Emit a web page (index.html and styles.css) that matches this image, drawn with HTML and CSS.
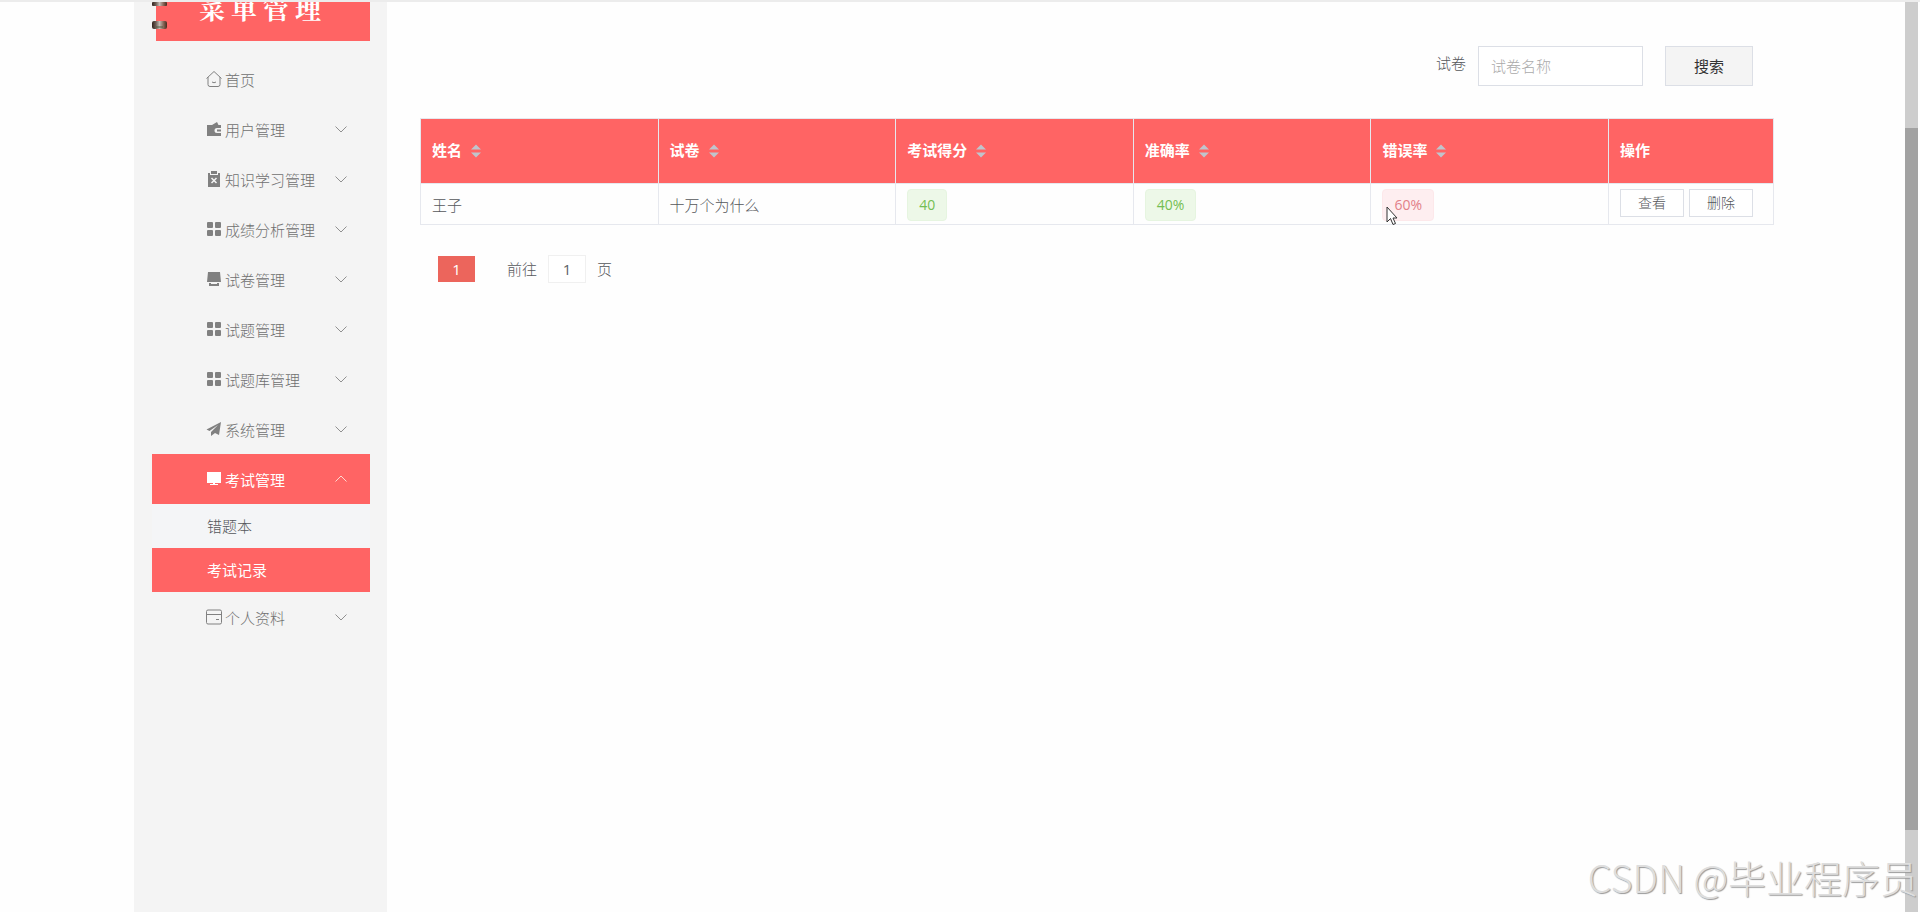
FILE: index.html
```html
<!DOCTYPE html>
<html lang="zh-CN">
<head>
  <meta charset="UTF-8" />
  <meta name="viewport" content="width=device-width, initial-scale=1.0" />
  <title>考试记录</title>
  <link rel="stylesheet" href="styles.css">
</head>
<body>
  <!-- Shared icons -->
  <svg class="sprite" aria-hidden="true">
    <symbol id="grid" viewBox="0 0 16 16">
      <rect x="1" y="1" width="6" height="6" rx="1" />
      <rect x="9" y="1" width="6" height="6" rx="1" />
      <rect x="1" y="9" width="6" height="6" rx="1" />
      <rect x="9" y="9" width="6" height="6" rx="1" />
    </symbol>
    <symbol id="arrow" viewBox="0 0 12 12">
      <path d="M0.500 3.500L6 9l5.500-5.500" fill="none" stroke="currentColor" />
    </symbol>
    <symbol id="sort" viewBox="0 0 10 14">
      <path d="M0 5.500L5 0.500l5 5zM0 8.500h10l-5 5z" />
    </symbol>
    <linearGradient id="metal">
      <stop offset="0" stop-color="#33251f" />
      <stop offset="0.250" stop-color="#6b5c54" />
      <stop offset="0.500" stop-color="#c4bab4" />
      <stop offset="0.750" stop-color="#8a6a5c" />
      <stop offset="1" stop-color="#4a2a1c" />
    </linearGradient>
  </svg>

  <div class="page">
    <aside class="sidebar">
      <div class="banner">
        <svg class="rings" viewBox="0 0 16 28">
          <rect x="0" y="0" width="15" height="4" rx="1" fill="url(#metal)" />
          <rect x="0" y="19" width="15" height="8" rx="2" fill="url(#metal)" />
          <path d="M4 25h7" fill="none" stroke="#4c5a3c" />
        </svg>
        <h1>菜单管理</h1>
      </div>
      <nav class="menu">
        <a class="item" href="#">
          <svg class="icon" viewBox="0 0 16 16"><path d="M2 6v7.500q0 2 2 2h8q2 0 2-2V6M0.500 7.500L8 0.500l7.500 7M6 11q2 1.500 4 0" fill="none" stroke="currentColor" /></svg>
          <span>首页</span>
        </a>
        <a class="item" href="#">
          <svg class="icon" viewBox="0 0 16 16"><path d="M1 4h5l5-3 1.500 3H15v3h-4a2 2 0 0 0 0 5h4v3H1zM11 8.500h4v2h-4z" /></svg>
          <span>用户管理</span><svg class="arrow"><use href="#arrow" /></svg>
        </a>
        <a class="item" href="#">
          <svg class="icon" viewBox="0 0 16 16"><path d="M2 2h2v2h8V2h2v14H2zM5 0h6v3H5z" /><path d="M5.500 7l5 5m0-5l-5 5" fill="none" stroke="#f4f4f4" stroke-width="1.500" /></svg>
          <span>知识学习管理</span><svg class="arrow"><use href="#arrow" /></svg>
        </a>
        <a class="item" href="#">
          <svg class="icon"><use href="#grid" /></svg>
          <span>成绩分析管理</span><svg class="arrow"><use href="#arrow" /></svg>
        </a>
        <a class="item" href="#">
          <svg class="icon" viewBox="0 0 16 16"><path d="M2 1h12l1 10H1zM3 12h2v1h6v-1h2v3H3z" /></svg>
          <span>试卷管理</span><svg class="arrow"><use href="#arrow" /></svg>
        </a>
        <a class="item" href="#">
          <svg class="icon"><use href="#grid" /></svg>
          <span>试题管理</span><svg class="arrow"><use href="#arrow" /></svg>
        </a>
        <a class="item" href="#">
          <svg class="icon"><use href="#grid" /></svg>
          <span>试题库管理</span><svg class="arrow"><use href="#arrow" /></svg>
        </a>
        <a class="item" href="#">
          <svg class="icon" viewBox="0 0 16 16"><path d="M0.500 8.500L15 1l-2 13-4-2-4 3v-4l7-7-8.500 6z" /></svg>
          <span>系统管理</span><svg class="arrow"><use href="#arrow" /></svg>
        </a>
        <a class="item active" href="#">
          <svg class="icon" viewBox="0 0 16 16"><path d="M1 1h14v11H1zM7 12h2v1h3v1H4v-1h3z" /></svg>
          <span>考试管理</span><svg class="arrow up"><use href="#arrow" /></svg>
        </a>
        <a class="sub-item" href="#">错题本</a>
        <a class="sub-item active" href="#">考试记录</a>
        <a class="item" href="#">
          <svg class="icon" viewBox="0 0 16 16"><path d="M2 1h12q1.500 0 1.500 1.500v11q0 1.500-1.500 1.500H2q-1.500 0-1.500-1.500v-11Q0.500 1 2 1zM0.500 5.500h15M10 10.500h3" fill="none" stroke="currentColor" /></svg>
          <span>个人资料</span><svg class="arrow"><use href="#arrow" /></svg>
        </a>
      </nav>
    </aside>

    <main class="content">
      <form class="search">
        <label for="paper">试卷</label>
        <input id="paper" type="text" placeholder="试卷名称">
        <button type="button">搜索</button>
      </form>

      <table class="records">
        <thead>
          <tr>
            <th>姓名<svg class="sort"><use href="#sort" /></svg></th>
            <th>试卷<svg class="sort"><use href="#sort" /></svg></th>
            <th>考试得分<svg class="sort"><use href="#sort" /></svg></th>
            <th>准确率<svg class="sort"><use href="#sort" /></svg></th>
            <th>错误率<svg class="sort"><use href="#sort" /></svg></th>
            <th class="actions">操作</th>
          </tr>
        </thead>
        <tbody>
          <tr>
            <td>王子</td>
            <td>十万个为什么</td>
            <td><span class="tag">40</span></td>
            <td><span class="tag">40%</span></td>
            <td><span class="tag danger">60%</span></td>
            <td class="actions">
              <div class="buttons">
                <button type="button">查看</button>
                <button type="button">删除</button>
              </div>
            </td>
          </tr>
        </tbody>
      </table>

      <div class="pagination">
        <button class="page-number" type="button">1</button>
        <label for="jump">前往</label>
        <input id="jump" type="text" value="1">
        <span>页</span>
      </div>
    </main>

    <div class="scrollbar"><div class="thumb"></div></div>
  </div>

  <svg class="cursor" viewBox="0 0 12 20">
    <path d="M1 1v15l3.500-3.500 2.500 6 2.500-1-2.500-5.500H11z" fill="#fff" stroke="#333" />
  </svg>
  <div class="watermark">CSDN @毕业程序员</div>
</body>
</html>
```
FILE: styles.css
```css
* {
  margin: 0;
  padding: 0;
  box-sizing: border-box;
}

body {
  font-family: "Open Sans", "Noto Sans CJK SC", sans-serif;
  font-size: 15px;
  font-weight: 300;
  line-height: 24px;
  color: #55575b;
  background: #fefefe;
  position: relative;
}

input,
button {
  font: inherit;
}

a {
  color: inherit;
  text-decoration: none;
}

.sprite {
  position: absolute;
  width: 0;
  height: 0;
}

svg {
  fill: currentColor;
}

.page {
  display: flex;
  min-height: 100vh;
  border-top: 2px solid #ececec;
}

/* Sidebar */
.sidebar {
  flex: 0 0 253px;
  margin-left: 134px;
  padding: 0 17px 0 18px;
  background: #f4f4f4;
}

.banner {
  position: relative;
  height: 39px;
  margin-left: 4px;
  background: #ff6464;
}

.banner h1 {
  height: 39px;
  padding-left: 43px;
  overflow: hidden;
  font-family: "Noto Serif CJK SC", "Noto Sans CJK SC", serif;
  font-size: 26px;
  font-weight: 700;
  letter-spacing: 6px;
  line-height: 12px;
  color: #fff;
}

.rings {
  position: absolute;
  top: 0;
  left: -4px;
  width: 16px;
  height: 28px;
}

.menu {
  padding-top: 13px;
}

.item {
  display: flex;
  align-items: center;
  height: 50px;
  padding: 0 23px 0 54px;
  color: #707070;
}

.item span {
  padding-top: 1px;
}

.icon {
  width: 16px;
  height: 16px;
  margin-right: 3px;
  color: #808080;
}

.arrow {
  width: 12px;
  height: 12px;
  margin-left: auto;
  color: #909090;
}

.arrow.up {
  transform: rotate(180deg);
  color: #ffd8d0;
}

.sub-item {
  display: block;
  height: 44px;
  padding-left: 55px;
  line-height: 44px;
  background: #f4f5f7;
}

.item.active,
.sub-item.active {
  font-weight: 400;
  color: #fff;
  background: #ff6464;
}

.item.active .icon {
  color: #fff;
}

/* Content */
.content {
  flex: 1;
  min-width: 0;
  padding: 44px 131px 0 33px;
}

.search {
  display: flex;
  justify-content: flex-end;
  margin-right: 21px;
}

.search label {
  margin-right: 12px;
  line-height: 34px;
}

.search input {
  width: 165px;
  height: 40px;
  padding: 0 12px;
  border: 1px solid #dcdfe6;
  background: #fff;
}

.search input::placeholder {
  color: #aaa;
}

.search button {
  width: 88px;
  height: 40px;
  margin-left: 22px;
  border: 1px solid #dcdfe6;
  font-weight: 400;
  color: #333;
  background: #f4f4f4;
}

.records {
  width: 100%;
  margin-top: 32px;
  table-layout: fixed;
  border-collapse: collapse;
}

.records th,
.records td {
  padding: 0 11px;
  border: 1px solid #e6e8ee;
  text-align: left;
}

.records th {
  height: 65px;
  padding-bottom: 2px;
  font-weight: 700;
  color: #fff;
  background: #ff6464;
}

.records td {
  height: 41px;
  padding-top: 2px;
}

.records .actions {
  width: 165px;
}

.sort {
  width: 10px;
  height: 14px;
  margin-left: 9px;
  vertical-align: -2px;
  color: #c0c4cc;
}

.tag {
  display: inline-block;
  height: 32px;
  padding: 0 11px;
  border: 1px solid #e6f5e0;
  border-radius: 4px;
  font-size: 14px;
  font-weight: 400;
  line-height: 30px;
  vertical-align: middle;
  color: #74be52;
  background: #edf8e8;
}

.tag.danger {
  color: #e28088;
  border-color: #fde8ea;
  background: #feeef0;
}

.buttons {
  display: flex;
  gap: 5px;
  padding-bottom: 4px;
}

.buttons button {
  width: 64px;
  height: 28px;
  border: 1px solid #dcdfe6;
  font-size: 14px;
  color: #55575b;
  background: #fff;
}

.pagination {
  display: flex;
  align-items: center;
  margin: 30px 0 0 18px;
}

.page-number {
  width: 37px;
  height: 26px;
  margin-right: 32px;
  border: 0;
  font-weight: 400;
  color: #fff;
  background: #ec655c;
}

.pagination input {
  width: 38px;
  height: 28px;
  margin: 0 11px;
  border: 1px solid #f0f0f0;
  font-weight: 400;
  text-align: center;
  color: #606266;
  background: #fff;
}

/* Scrollbar */
.scrollbar {
  width: 13px;
  margin-right: 2px;
  padding-top: 126px;
  background: #cdcdcd;
}

.thumb {
  height: 702px;
  background: #a2a2a2;
}

/* Overlays */
.cursor {
  position: absolute;
  top: 206px;
  left: 1386px;
  width: 12px;
  height: 20px;
}

.watermark {
  position: absolute;
  right: 2px;
  bottom: 8px;
  font-family: "Noto Sans CJK SC", sans-serif;
  font-size: 38px;
  font-weight: 300;
  line-height: 54px;
  color: #dedede;
  text-shadow: 1px 1px 1px #999;
}
```
